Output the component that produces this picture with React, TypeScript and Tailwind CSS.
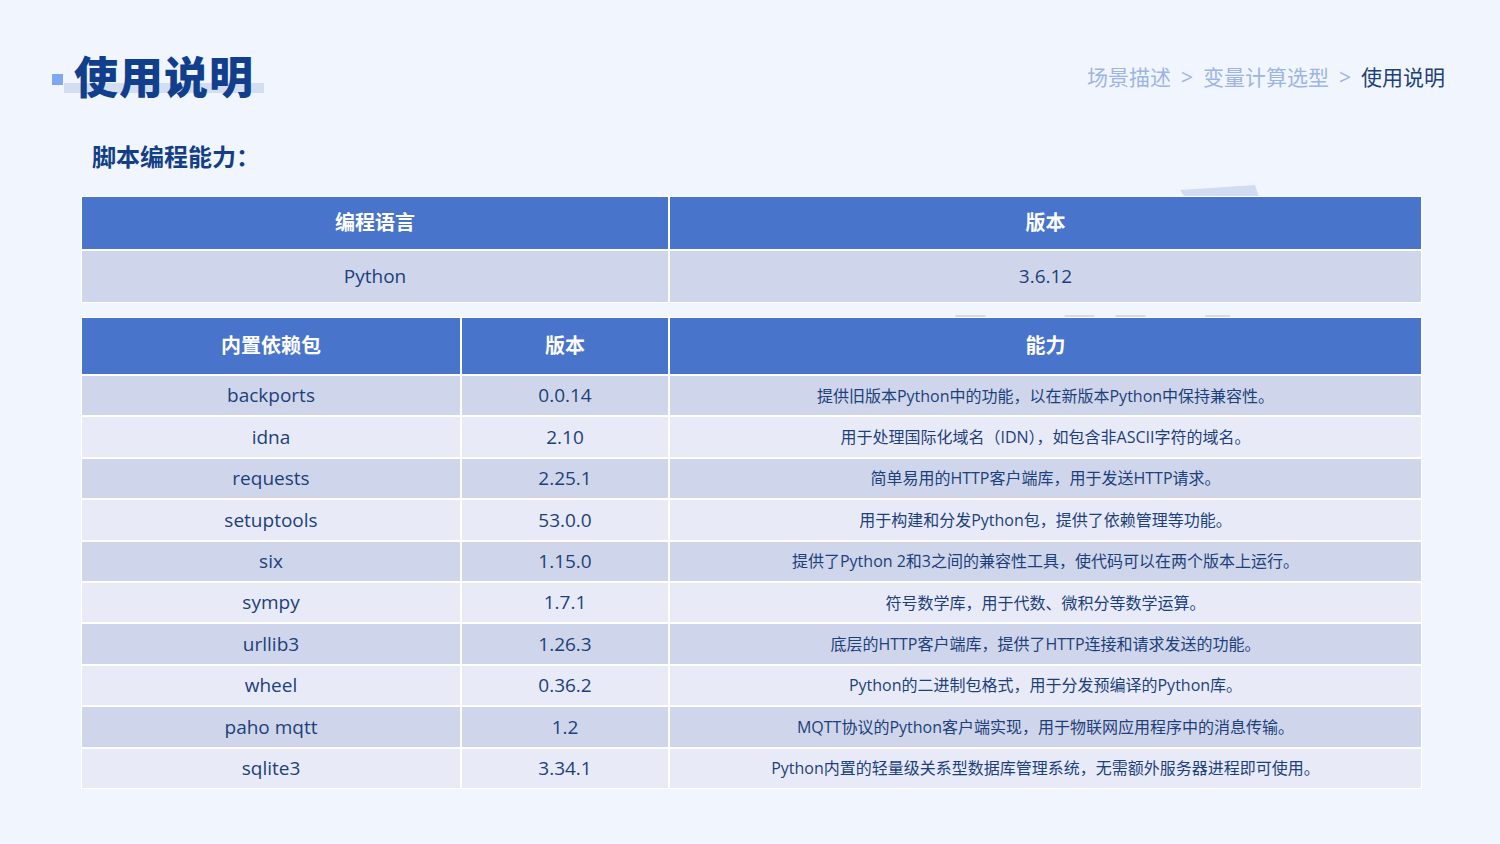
import React from 'react';

const pkgs = [
  ['backports', '0.0.14', '提供旧版本Python中的功能，以在新版本Python中保持兼容性。'],
  ['idna', '2.10', '用于处理国际化域名（IDN），如包含非ASCII字符的域名。'],
  ['requests', '2.25.1', '简单易用的HTTP客户端库，用于发送HTTP请求。'],
  ['setuptools', '53.0.0', '用于构建和分发Python包，提供了依赖管理等功能。'],
  ['six', '1.15.0', '提供了Python 2和3之间的兼容性工具，使代码可以在两个版本上运行。'],
  ['sympy', '1.7.1', '符号数学库，用于代数、微积分等数学运算。'],
  ['urllib3', '1.26.3', '底层的HTTP客户端库，提供了HTTP连接和请求发送的功能。'],
  ['wheel', '0.36.2', 'Python的二进制包格式，用于分发预编译的Python库。'],
  ['paho mqtt', '1.2', 'MQTT协议的Python客户端实现，用于物联网应用程序中的消息传输。'],
  ['sqlite3', '3.34.1', 'Python内置的轻量级关系型数据库管理系统，无需额外服务器进程即可使用。'],
];

const font = { fontFamily: '"Open Sans", "Noto Sans CJK SC", sans-serif' };

const App = () => {
  return (
    <div className="relative w-[1500px] h-[844px] overflow-hidden bg-[#f1f6fe] text-[#1d3f7a]" style={font}>
      {/* watermark */}
      <svg className="absolute left-[940px] top-[185px]" width="330" height="150" viewBox="0 0 330 150">
        <polygon points="240,5 315,0 320,15 250,20" fill="#d2dcf0" />
        <polygon points="15,130 45,130 55,150 20,150" fill="#d2dcf0" />
        <polygon points="125,130 155,130 145,150 118,150" fill="#d2dcf0" />
        <polygon points="175,130 205,130 215,150 185,150" fill="#d2dcf0" />
        <polygon points="265,130 290,130 295,150 270,150" fill="#d2dcf0" />
      </svg>

      <div className="relative flex justify-between items-center pl-[52px] pr-[55px] pt-[50px]">
        <div className="relative flex items-center">
          <div className="w-[11px] h-[11px] bg-[#7ea8f5] mr-[11px] mt-[4px]" />
          <div className="absolute left-[12px] top-[33px] w-[200px] h-[10px] bg-[#d3def3]" />
          <div className="relative text-[44px] font-black text-[#123f8c] leading-[54px] tracking-[1px]">使用说明</div>
        </div>
        <div className="text-[21px] flex gap-[10px] mt-[2px]">
          <span className="text-[#9db5e4]">场景描述</span>
          <span className="text-[#9db5e4]">&gt;</span>
          <span className="text-[#9db5e4]">变量计算选型</span>
          <span className="text-[#9db5e4]">&gt;</span>
          <span className="text-[#1d3f7a]">使用说明</span>
        </div>
      </div>

      <div className="relative pl-[92px] mt-[36px] text-[24px] font-bold text-[#143f86] leading-[34px]">脚本编程能力：</div>

      <div className="relative mx-[81px] mt-[22px] w-[1341px]">
        <div className="grid grid-cols-[586px_1fr] gap-[2px] bg-white p-[1px]">
          <div className="bg-[#4874cb] text-white font-bold text-[20px] h-[52px] flex items-center justify-center">编程语言</div>
          <div className="bg-[#4874cb] text-white font-bold text-[20px] h-[52px] flex items-center justify-center">版本</div>
          <div className="bg-[#cfd6eb] text-[19px] h-[51px] flex items-center justify-center">Python</div>
          <div className="bg-[#cfd6eb] text-[19px] h-[51px] flex items-center justify-center">3.6.12</div>
        </div>

        <div className="grid grid-cols-[378px_206px_1fr] gap-[2px] bg-white p-[1px] mt-[14px]">
          <div className="bg-[#4874cb] text-white font-bold text-[20px] h-[56px] flex items-center justify-center">内置依赖包</div>
          <div className="bg-[#4874cb] text-white font-bold text-[20px] h-[56px] flex items-center justify-center">版本</div>
          <div className="bg-[#4874cb] text-white font-bold text-[20px] h-[56px] flex items-center justify-center">能力</div>
          {pkgs.map((p, i) => (
            <React.Fragment key={p[0]}>
              <div className={`${i % 2 === 0 ? 'bg-[#cfd6eb]' : 'bg-[#e8ebf7]'} text-[19px] h-[39.4px] flex items-center justify-center`}>{p[0]}</div>
              <div className={`${i % 2 === 0 ? 'bg-[#cfd6eb]' : 'bg-[#e8ebf7]'} text-[19px] h-[39.4px] flex items-center justify-center`}>{p[1]}</div>
              <div className={`${i % 2 === 0 ? 'bg-[#cfd6eb]' : 'bg-[#e8ebf7]'} text-[16px] h-[39.4px] flex items-center justify-center`}>{p[2]}</div>
            </React.Fragment>
          ))}
        </div>
      </div>
    </div>
  );
};

export default App;
